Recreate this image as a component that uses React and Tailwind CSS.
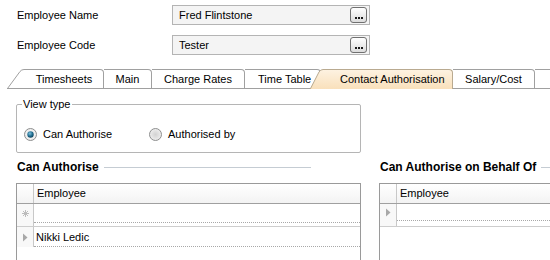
import React from 'react'

function DotsButton() {
  return (
    <div className="w-[17px] h-[16px] rounded-[3px] border border-[#707070] bg-gradient-to-b from-white to-[#dcdcdc] flex items-end justify-center pb-[3px] shrink-0">
      <div className="flex gap-[1px]">
        <span className="w-[2px] h-[2px] bg-[#1a1a1a]" />
        <span className="w-[2px] h-[2px] bg-[#1a1a1a]" />
        <span className="w-[2px] h-[2px] bg-[#1a1a1a]" />
      </div>
    </div>
  )
}

function Field({ label, value, className = '' }) {
  return (
    <div className={`flex items-center ${className}`}>
      <div className="w-[172px] pl-[17px]">{label}</div>
      <div className="w-[198px] h-[20px] border border-[#b4b4b4] bg-[#f4f4f4] flex items-center pl-[6px] pr-[2px]">
        <span className="flex-1">{value}</span>
        <DotsButton />
      </div>
    </div>
  )
}

function Radio({ checked }) {
  return (
    <svg width="13" height="13" viewBox="0 0 13 13" className="shrink-0">
      <defs>
        <radialGradient id={checked ? 'rOn' : 'rOff'} cx="0.5" cy="0.5" r="0.6">
          <stop offset="0" stopColor={checked ? '#ffffff' : '#d2d2d2'} />
          <stop offset="1" stopColor={checked ? '#e6e6e6' : '#f4f4f4'} />
        </radialGradient>
        <radialGradient id="dot" cx="0.4" cy="0.35" r="0.7">
          <stop offset="0" stopColor="#7fc0dd" />
          <stop offset="0.6" stopColor="#1d6a8c" />
          <stop offset="1" stopColor="#0d3d55" />
        </radialGradient>
      </defs>
      <circle cx="6.5" cy="6.5" r="6" fill={`url(#${checked ? 'rOn' : 'rOff'})`} stroke="#8e8f8f" />
      {checked && <circle cx="6.5" cy="6.5" r="3.2" fill="url(#dot)" />}
    </svg>
  )
}

function RowArrow() {
  return (
    <svg width="6" height="9" viewBox="0 0 6 9">
      <path d="M1 0.5 L5.5 4.5 L1 8.5 Z" fill="#a8a8a8" />
    </svg>
  )
}

function NewRowStar() {
  return (
    <svg width="7" height="7" viewBox="0 0 7 7">
      <path d="M3.5 0 V7 M0 3.5 H7 M1 1 L6 6 M6 1 L1 6" stroke="#bcbcbc" strokeWidth="1" />
    </svg>
  )
}

function GridHeader() {
  return (
    <div className="h-[20px] flex border-b border-[#a0a0a0] bg-gradient-to-b from-white to-[#f3f3f3]">
      <div className="w-[17px] border-r border-[#c8c8c8] shrink-0" />
      <div className="flex-1 flex items-center pl-[3px]">Employee</div>
    </div>
  )
}

export default function App() {
  return (
    <div className="w-[550px] h-[260px] overflow-hidden bg-white text-[11px] leading-[13px] text-black font-['Liberation_Sans',Arial,sans-serif]">
      <div className="pt-[5px]">
        <Field label="Employee Name" value="Fred Flintstone" />
        <Field label="Employee Code" value="Tester" className="mt-[10px]" />
      </div>

      {/* Tabs */}
      <div className="flex h-[20px] mt-[14px]">
        <div className="w-[7px] shrink-0" />
        <svg width="18" height="20" viewBox="0 0 18 20" className="shrink-0">
          <path d="M0.5 20 L13 2.5 Q14.5 0.5 17 0.5 L18 0.5 L18 20 Z" fill="#fff" />
          <path d="M0.5 19.5 L13 2.5 Q14.5 0.5 17 0.5 L18 0.5" fill="none" stroke="#a0a0a0" />
          <path d="M0 19.5 H18" stroke="#a0a0a0" />
        </svg>
        <div className="w-[79px] shrink-0 border-t border-r border-b border-[#a0a0a0] rounded-tr-[4px] flex items-center justify-center">Timesheets</div>
        <div className="w-[48px] shrink-0 border-t border-r border-b border-[#a0a0a0] rounded-tr-[4px] flex items-center justify-center">Main</div>
        <div className="w-[93px] shrink-0 border-t border-r border-b border-[#a0a0a0] rounded-tr-[4px] flex items-center justify-center">Charge Rates</div>
        <div className="w-[76px] shrink-0 border-t border-r border-b border-[#a0a0a0] rounded-tr-[4px] flex items-center pl-[13px]">Time Table</div>
        <div className="flex shrink-0 -ml-[11px] relative z-10">
          <svg width="13" height="20" viewBox="0 0 13 20" className="shrink-0">
            <defs>
              <linearGradient id="sel" x1="0" y1="0" x2="0" y2="1">
                <stop offset="0" stopColor="#fdf2e1" />
                <stop offset="1" stopColor="#f9e0bb" />
              </linearGradient>
            </defs>
            <path d="M0 20 L9 3 Q10.5 0.5 13 0.5 L13 20 Z" fill="url(#sel)" />
            <path d="M0.3 20 L9 3 Q10.5 0.5 13 0.5" fill="none" stroke="#b9aa90" />
          </svg>
          <div className="w-[130px] border-t border-r border-[#b9aa90] rounded-tr-[4px] bg-gradient-to-b from-[#fdf2e1] to-[#f9e0bb] flex items-center pl-[17px]">Contact Authorisation</div>
        </div>
        <div className="w-[82px] shrink-0 border-t border-r border-b border-[#a0a0a0] rounded-tr-[4px] flex items-center justify-center">Salary/Cost</div>
        <div className="flex-1 border-t border-b border-[#a0a0a0]" />
      </div>

      {/* View type */}
      <fieldset className="mt-[9px] ml-[16px] w-[345px] h-[55px] border border-[#b5b5b5] rounded-[2px]">
        <legend className="ml-[5px] px-[1px] leading-[12px]">View type</legend>
        <div className="mt-[17px] flex items-center pl-[7px] h-[14px]">
          <div className="w-[125px] flex items-center gap-[6px]">
            <Radio checked />
            <span>Can Authorise</span>
          </div>
          <div className="flex items-center gap-[6px]">
            <Radio />
            <span>Authorised by</span>
          </div>
        </div>
      </fieldset>

      {/* Lists */}
      <div className="flex mt-[7px]">
        <div className="w-[345px] ml-[16px] shrink-0">
          <div className="h-[14px] flex items-center">
            <span className="pl-[1px] font-bold text-[12px] leading-[14px]">Can Authorise</span>
            <div className="ml-[5px] w-[207px] h-px bg-[#c5ccd3]" />
          </div>
          <div className="mt-[9px] border border-[#9a9a9a] h-[82px]">
            <GridHeader />
            <div className="h-[19px] flex">
              <div className="w-[17px] border-r border-[#c8c8c8] bg-[#f8f8f8] flex items-center justify-center">
                <NewRowStar />
              </div>
              <div className="flex-1 border-b border-dotted border-[#a8a8a8]" />
            </div>
            <div className="h-[4px] flex border-b border-[#cdcdcd]">
              <div className="w-[17px] border-r border-[#c8c8c8] bg-[#f8f8f8]" />
            </div>
            <div className="h-[20px] flex">
              <div className="w-[17px] border-r border-[#c8c8c8] bg-[#f8f8f8] flex items-center justify-center">
                <RowArrow />
              </div>
              <div className="flex-1 flex items-center pl-[2px] pt-[1px] border-b border-dotted border-[#a8a8a8]">Nikki Ledic</div>
            </div>
          </div>
        </div>

        <div className="w-[200px] ml-[18px] shrink-0">
          <div className="h-[14px] flex items-center">
            <span className="pl-[1px] font-bold text-[12px] leading-[14px] whitespace-nowrap">Can Authorise on Behalf Of</span>
            <div className="ml-[5px] flex-1 h-px bg-[#c5ccd3]" />
          </div>
          <div className="mt-[9px] border border-[#9a9a9a] h-[82px]">
            <GridHeader />
            <div className="h-[17px] flex">
              <div className="w-[17px] border-r border-[#c8c8c8] bg-[#f8f8f8] flex items-center justify-center">
                <RowArrow />
              </div>
              <div className="flex-1 border-b border-dotted border-[#a8a8a8]" />
            </div>
            <div className="h-[6px] flex border-b border-[#cdcdcd]">
              <div className="w-[17px] border-r border-[#c8c8c8] bg-[#f8f8f8]" />
            </div>
          </div>
        </div>
      </div>
    </div>
  )
}
